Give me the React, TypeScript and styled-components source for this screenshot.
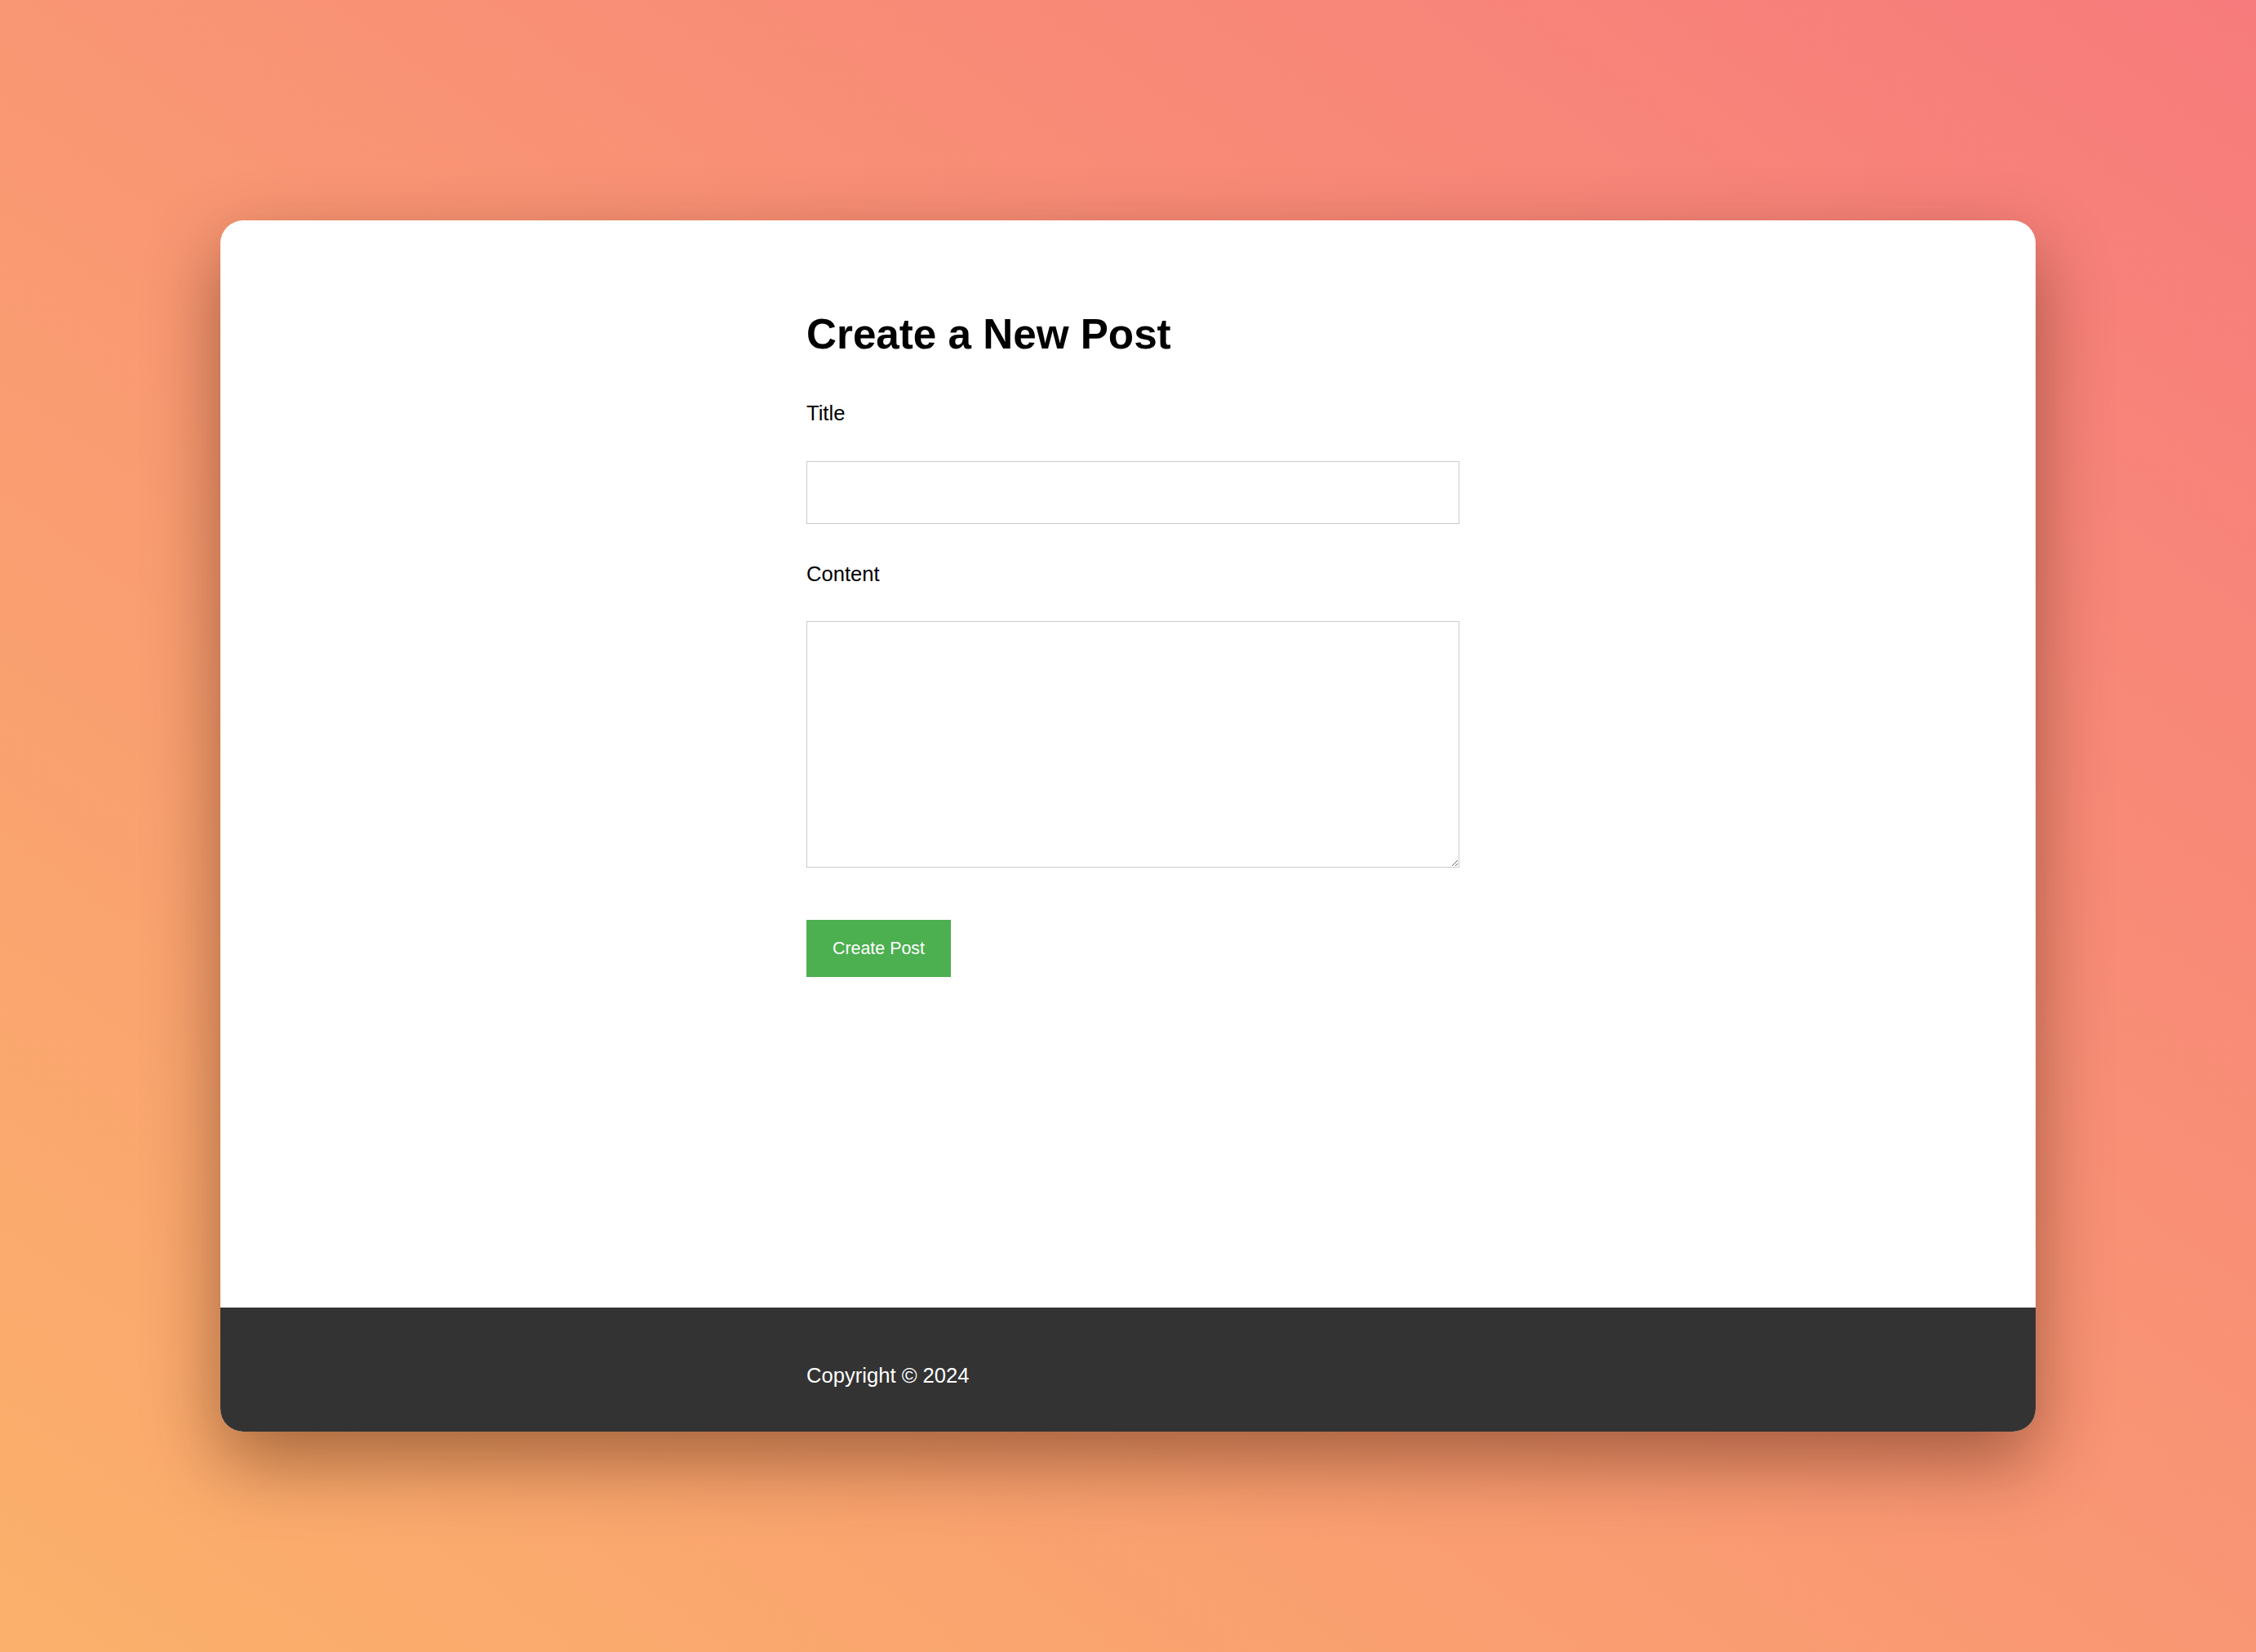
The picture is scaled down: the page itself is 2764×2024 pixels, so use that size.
import React from "react";
import styled, { createGlobalStyle } from "styled-components";

const GlobalStyle = createGlobalStyle`
  html, body {
    margin: 0;
    padding: 0;
  }
  body {
    font-family: "Liberation Sans", Arial, Helvetica, sans-serif;
    background: linear-gradient(to top right, #fbb16b, #f77b7c);
    min-height: 100vh;
  }
  * {
    box-sizing: border-box;
  }
`;

const Page = styled.div`
  display: flex;
  justify-content: center;
  align-items: flex-start;
  padding: 270px 0;
  min-height: 100vh;
`;

const Card = styled.div`
  width: 2224px;
  height: 1484px;
  display: flex;
  flex-direction: column;
  background: #fff;
  border-radius: 28px;
  overflow: hidden;
  box-shadow: 0 36px 90px rgba(60, 20, 0, 0.45);
`;

const Main = styled.main`
  flex: 1;
  padding: 110px 0 0 12px;
`;

const Container = styled.div`
  width: 800px;
  margin: 0 auto;
`;

const Heading = styled.h1`
  margin: 0 0 53px;
  font-size: 51.2px;
  line-height: 59px;
  font-weight: 700;
  color: #000;
`;

const Form = styled.form`
  display: flex;
  flex-direction: column;
  align-items: flex-start;
`;

const Label = styled.label<{ $gap: number }>`
  display: block;
  font-size: 25.6px;
  line-height: 29px;
  color: #000;
  margin-bottom: ${(p) => p.$gap}px;
`;

const TextInput = styled.input`
  display: block;
  width: 800px;
  height: 77px;
  margin: 0 0 47px;
  padding: 0 16px;
  border: 1px solid #ccc;
  border-radius: 0;
  font-family: inherit;
  font-size: 25.6px;
  outline: none;
`;

const TextArea = styled.textarea`
  display: block;
  width: 800px;
  height: 302px;
  margin: 0 0 64px;
  padding: 16px;
  border: 1px solid #ccc;
  border-radius: 0;
  font-family: inherit;
  font-size: 25.6px;
  outline: none;
`;

const SubmitButton = styled.button`
  height: 70px;
  padding: 0 32px;
  border: none;
  border-radius: 0;
  background: #4caf50;
  color: #fff;
  font-family: "Liberation Sans", Arial, sans-serif;
  font-size: 21.4px;
  cursor: pointer;
`;

const Footer = styled.footer`
  height: 152px;
  flex: none;
  background: #333;
  color: #fff;
  padding: 69px 0 0 12px;
`;

const FooterText = styled.p`
  margin: 0;
  font-size: 25.6px;
  line-height: 29px;
`;

export default function App() {
  return (
    <>
      <GlobalStyle />
      <Page>
        <Card>
          <Main>
            <Container>
              <Heading>Create a New Post</Heading>
              <Form onSubmit={(e) => e.preventDefault()}>
                <Label $gap={44} htmlFor="title">
                  Title
                </Label>
                <TextInput id="title" type="text" />
                <Label $gap={43} htmlFor="content">
                  Content
                </Label>
                <TextArea id="content" />
                <SubmitButton type="submit">Create Post</SubmitButton>
              </Form>
            </Container>
          </Main>
          <Footer>
            <Container>
              <FooterText>Copyright © 2024</FooterText>
            </Container>
          </Footer>
        </Card>
      </Page>
    </>
  );
}
